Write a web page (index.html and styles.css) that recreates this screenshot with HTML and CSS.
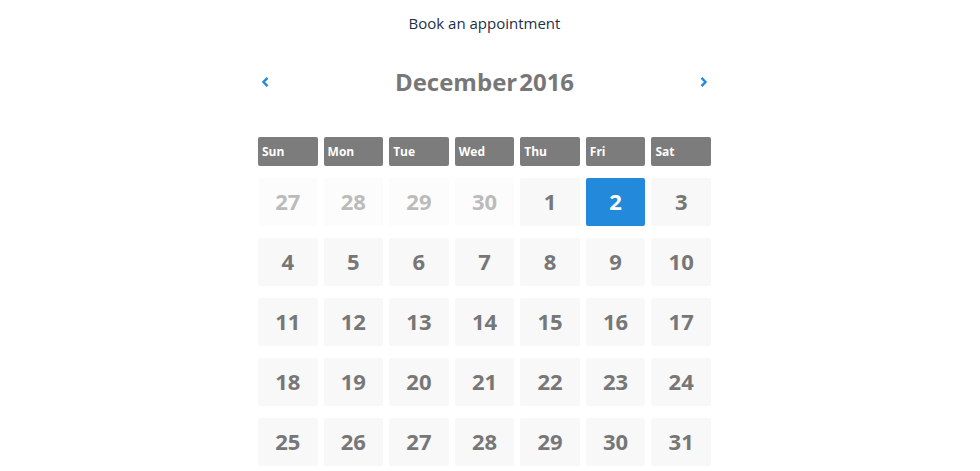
FILE: index.html
```html
<!DOCTYPE html>
<html lang="en">
<head>
    <meta charset="UTF-8">
    <meta name="viewport" content="width=device-width, initial-scale=1.0">
    <title>Book an appointment</title>
    <link rel="stylesheet" href="styles.css">
</head>
<body>
    <main class="booking">
        <h1 class="title">Book an appointment</h1>
        <div class="month-nav">
            <button type="button" class="arrow" aria-label="Previous month">
                <svg width="8" height="12" viewBox="0 0 8 12"><path d="M6.500 1.800L2.500 6l4 4.200"/></svg>
            </button>
            <h2 class="month"><span>December</span><span>2016</span></h2>
            <button type="button" class="arrow" aria-label="Next month">
                <svg width="8" height="12" viewBox="0 0 8 12"><path d="M1.500 1.800l4 4.200-4 4.200"/></svg>
            </button>
        </div>
        <table class="calendar">
            <thead>
                <tr><th>Sun</th><th>Mon</th><th>Tue</th><th>Wed</th><th>Thu</th><th>Fri</th><th>Sat</th></tr>
            </thead>
            <tbody>
                <tr>
                    <td><button type="button" class="day other">27</button></td>
                    <td><button type="button" class="day other">28</button></td>
                    <td><button type="button" class="day other">29</button></td>
                    <td><button type="button" class="day other">30</button></td>
                    <td><button type="button" class="day">1</button></td>
                    <td><button type="button" class="day selected">2</button></td>
                    <td><button type="button" class="day">3</button></td>
                </tr>
                <tr>
                    <td><button type="button" class="day">4</button></td>
                    <td><button type="button" class="day">5</button></td>
                    <td><button type="button" class="day">6</button></td>
                    <td><button type="button" class="day">7</button></td>
                    <td><button type="button" class="day">8</button></td>
                    <td><button type="button" class="day">9</button></td>
                    <td><button type="button" class="day">10</button></td>
                </tr>
                <tr>
                    <td><button type="button" class="day">11</button></td>
                    <td><button type="button" class="day">12</button></td>
                    <td><button type="button" class="day">13</button></td>
                    <td><button type="button" class="day">14</button></td>
                    <td><button type="button" class="day">15</button></td>
                    <td><button type="button" class="day">16</button></td>
                    <td><button type="button" class="day">17</button></td>
                </tr>
                <tr>
                    <td><button type="button" class="day">18</button></td>
                    <td><button type="button" class="day">19</button></td>
                    <td><button type="button" class="day">20</button></td>
                    <td><button type="button" class="day">21</button></td>
                    <td><button type="button" class="day">22</button></td>
                    <td><button type="button" class="day">23</button></td>
                    <td><button type="button" class="day">24</button></td>
                </tr>
                <tr>
                    <td><button type="button" class="day">25</button></td>
                    <td><button type="button" class="day">26</button></td>
                    <td><button type="button" class="day">27</button></td>
                    <td><button type="button" class="day">28</button></td>
                    <td><button type="button" class="day">29</button></td>
                    <td><button type="button" class="day">30</button></td>
                    <td><button type="button" class="day">31</button></td>
                </tr>
            </tbody>
        </table>
    </main>
</body>
</html>
```

FILE: styles.css
```css
body {
    margin: 0;
    padding-right: 11px;
    background-color: #fff;
    color: #777;
    font-family: 'Open Sans', sans-serif;
}
.booking {
    max-width: 465px;
    margin: 0 auto;
    padding-top: 11px;
}
.title {
    margin: 0;
    color: #1d3049;
    font-size: 15px;
    font-weight: 400;
    line-height: 24px;
    text-align: center;
}
.month-nav {
    display: flex;
    align-items: center;
    justify-content: space-between;
    margin: 29px 0 25px;
    padding: 0 6px;
}
.month {
    display: flex;
    gap: 2px;
    margin: 0;
    font-size: 24px;
    font-weight: 700;
    line-height: 36px;
}
.arrow {
    padding: 4px 3px;
    border: none;
    background: none;
    cursor: pointer;
}
.arrow svg {
    display: block;
    fill: none;
    stroke: #2389db;
    stroke-width: 2.4;
}
.calendar {
    width: 100%;
    margin-bottom: -12px;
    table-layout: fixed;
    border-collapse: separate;
    border-spacing: 6px 12px;
}
.calendar td {
    padding: 0;
}
.calendar th {
    height: 29px;
    padding: 0 4px;
    border-radius: 2px;
    background-color: #7c7c7c;
    color: #fff;
    font-size: 12px;
    text-align: left;
}
.day {
    display: block;
    width: 100%;
    height: 48px;
    padding: 0 0 3px;
    border: none;
    border-radius: 2px;
    background-color: #f8f8f8;
    color: #777;
    font-family: inherit;
    font-size: 22px;
    font-weight: 700;
    cursor: pointer;
}
.other {
    background-color: #fcfcfc;
    color: #bbb;
}
.selected {
    background-color: #2389db;
    color: #fff;
}
```
